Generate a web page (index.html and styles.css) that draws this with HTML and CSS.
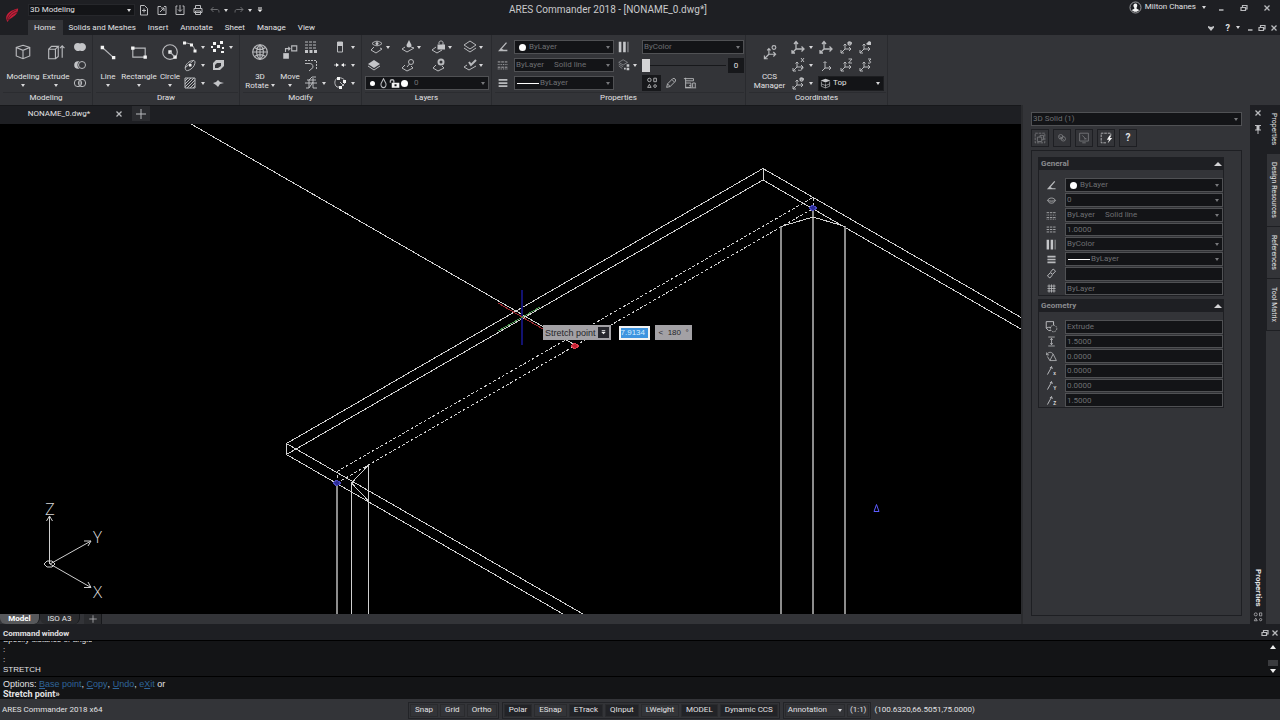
FILE: index.html
```html
<!DOCTYPE html>
<html lang="en">
<head>
    <meta charset="UTF-8">
    <meta name="viewport" content="width=device-width, initial-scale=1.0">
    <title>ARES Commander 2018 - [NONAME_0.dwg*]</title>
    <link rel="stylesheet" href="styles.css">
</head>
<body>
    <!-- Icon sprite -->
    <svg class="sprite" aria-hidden="true">
        <symbol id="i-new" viewBox="0 0 16 16"><path d="M4.5 3.500V13h7V6.5l-3-3h-4zM8 6.500v4M6 8.500h4"/></symbol>
        <symbol id="i-open" viewBox="0 0 16 16"><path d="M7 4.500H4V12.500h8V4.500h-2M6 10l4-4M7 6h3v3"/></symbol>
        <symbol id="i-save" viewBox="0 0 16 16"><path d="M5.500 4H4v8.500h8V4h-1.500M8 3v6M6 7.500L8 9.500l2-2"/></symbol>
        <symbol id="i-print" viewBox="0 0 16 16"><path d="M5.500 6.500v-3h5v3M4 6.500h8v4H4zM5.500 9h5v3.500h-5z"/></symbol>
        <symbol id="i-undo" viewBox="0 0 16 16"><path d="M6.500 5L4 7.500 6.500 10M4 7.500h6.500c1 0 1.500 1 1.500 3"/></symbol>
        <symbol id="i-redo" viewBox="0 0 16 16"><path d="M9.500 5L12 7.500 9.500 10M12 7.500H5.500c-1 0-1.500 1-1.500 3"/></symbol>
        <symbol id="i-box" viewBox="0 0 16 16"><path d="M8 2l6 2v7.500L8 14l-6-2.500V4zM2 4l6 2.500L14 4M8 6.500V14"/></symbol>
        <symbol id="i-extrude" viewBox="0 0 16 16"><path d="M1.500 5.500h6V14h-6zM1.500 5.500L4 3h6L7.500 5.500M10 3v9L7.500 14M13.500 13V2.500M11.500 4.500l2-2 2 2"/></symbol>
        <symbol id="i-union" viewBox="0 0 16 16"><path class="fill" d="M6 4a4 4 0 0 1 2 .6A4 4 0 0 1 14 8a4 4 0 0 1-6 3.400A4 4 0 0 1 2 8a4 4 0 0 1 4-4z"/></symbol>
        <symbol id="i-subtract" viewBox="0 0 16 16"><circle cx="10" cy="8" r="3.500"/><path class="fill" d="M6 4.200a3.800 3.800 0 0 0 0 7.600h1.500a4.500 4.500 0 0 1 0-7.600z"/></symbol>
        <symbol id="i-intersect" viewBox="0 0 16 16"><circle cx="6" cy="8" r="3.700"/><circle cx="10" cy="8" r="3.700"/><path d="M8 5.500v5"/></symbol>
        <symbol id="i-line" viewBox="0 0 16 16"><path d="M3 4l10 9"/><path class="fill w" d="M1.500 2.500h3v3h-3zM11.500 11.500h3v3h-3z"/></symbol>
        <symbol id="i-rect" viewBox="0 0 16 16"><path d="M2.500 4.500h11v8h-11z"/><path class="fill w" d="M1 3h3v3H1zM12 11h3v3h-3z"/></symbol>
        <symbol id="i-circle" viewBox="0 0 16 16"><circle cx="8" cy="8" r="6.500"/><path class="fill w" d="M6.500 6.500h3v3h-3zM11 11h3v3h-3z"/><path d="M8 8l4 4"/></symbol>
        <symbol id="i-arc" viewBox="0 0 16 16"><path d="M3 4c6 0 9 3 10 8"/><path class="fill w" d="M1 2.500h3v3H1zM8 4.500h3v3H8zM11.500 10.500h3v3h-3z"/></symbol>
        <symbol id="i-ellipse" viewBox="0 0 16 16"><path d="M4 13c-2-2 0-6 3-8s6-2 6 0-1 5-4 7-5 2-5 1zM3 11l9-8"/><path class="fill w" d="M7 7h2.500v2.500H7z"/></symbol>
        <symbol id="i-hatch" viewBox="0 0 16 16"><path d="M3 3h10v10H3zM3 6l3-3M3 9l6-6M3 12l9-9M5 13l8-8M8 13l5-5M11 13l2-2"/></symbol>
        <symbol id="i-points" viewBox="0 0 16 16"><path class="fill w" d="M3 3h3v3H3zM10 2h3v3h-3zM7 6h3v3H7zM3 10h3v3H3zM12 8h2v2h-2zM11 12h3v2h-3zM1 7h2v2H1z"/></symbol>
        <symbol id="i-region" viewBox="0 0 16 16"><path class="fill" fill-rule="evenodd" d="M6 3h8v6l-4 4H3V6zM7 6L5 8v3h3l3-2V6z"/></symbol>
        <symbol id="i-patch" viewBox="0 0 16 16"><path class="fill" d="M3 8l3-1 2-2 2 2 4 1-4 1-2 3-2-2z"/></symbol>
        <symbol id="i-globe" viewBox="0 0 16 16"><circle cx="8" cy="8" r="6.500"/><path d="M8 1.500v13M1.500 8h13M3 4c3 2 7 2 10 0M3 12c3-2 7-2 10 0M8 1.500c-4 3-4 10 0 13M8 1.500c4 3 4 10 0 13"/></symbol>
        <symbol id="i-move" viewBox="0 0 16 16"><path d="M9.500 2.500H14V7H9.500zM4 8V5h4M6.500 3.500L8 5 6.500 6.500"/><path class="fill" d="M2 9h5v5H2z"/></symbol>
        <symbol id="i-array" viewBox="0 0 16 16"><path d="M2 3h12M2 6h12M2 9h12" stroke-dasharray="3 1"/><path class="fill" d="M2 11h3v3H2zM6.500 11h3v3h-3zM11 11h3v3h-3z"/></symbol>
        <symbol id="i-fillet" viewBox="0 0 16 16"><path d="M2 3.500h11.500V12" stroke-dasharray="2 1"/><path d="M2 6.500h4c3 0 4 1 4 4l-4 3.500"/></symbol>
        <symbol id="i-trim" viewBox="0 0 16 16"><path d="M3 13h3V5l3-3h4M2 8h12M4 5h9M10 3v10h4M6 13l4-6"/></symbol>
        <symbol id="i-panel" viewBox="0 0 16 16"><path d="M5.500 3h5v10h-5z"/><path class="fill" d="M5 3h6v4H5z"/></symbol>
        <symbol id="i-break" viewBox="0 0 16 16"><path d="M2 8h4M10 8h4"/><path class="fill w" d="M4 6l3 2-3 2zM12 6L9 8l3 2z"/></symbol>
        <symbol id="i-polyedit" viewBox="0 0 16 16"><path d="M5 12C2 10 2 4 6 3s8 2 7 5l-4 4zM8 7l4 4"/><path class="fill w" d="M5 2h3v3H5zM11 5h3v3h-3zM7 11h3v3H7z"/></symbol>
        <!-- Layers -->
        <symbol id="i-lay-eye" viewBox="0 0 16 16"><path d="M5 8l-3 3 5 3 6-4-2-1M3 4.500c3-3 7-3 10 0-3 3-7 3-10 0z"/><circle class="fill" cx="8" cy="4.500" r="1.500"/></symbol>
        <symbol id="i-lay-freeze" viewBox="0 0 16 16"><path d="M5 8l-3 2 5 3 7-4-3-1"/><path class="fill" d="M9 1l2.500 5a2.500 2.500 0 1 1-5 0z"/></symbol>
        <symbol id="i-lay-lock" viewBox="0 0 16 16"><path d="M5 8l-4 3 5 3 5-3M8 5V3.500c0-2 4-2 4 0V6"/><path class="fill" d="M6.500 5.500h7.500v5H6.500z"/></symbol>
        <symbol id="i-lay" viewBox="0 0 16 16"><path d="M2 6l6-4 6 4-6 4zM2 9l6 4 6-4"/></symbol>
        <symbol id="i-lay-full" viewBox="0 0 16 16"><path class="fill" d="M2 7l6-4 6 4-6 4z"/><path d="M2 9l6 4 6-4"/></symbol>
        <symbol id="i-lay-find" viewBox="0 0 16 16"><path d="M5 8l-3 3 5 3 6-3-2-2M9.500 7L7 10"/><circle cx="11" cy="5" r="2.500"/></symbol>
        <symbol id="i-lay-gear" viewBox="0 0 16 16"><path d="M5 8l-3 3 5 3 6-3-2-2"/><circle cx="10" cy="5" r="2.500" stroke-width="2"/></symbol>
        <symbol id="i-lay-check" viewBox="0 0 16 16"><path d="M5 8l-3 2 5 3 7-4"/><path d="M7 5l2 3 5-5" stroke-width="2"/></symbol>
        <symbol id="i-drop" viewBox="0 0 16 16"><path d="M8 1L4.500 8c-1.500 8 8.500 8 7 0z" stroke-width="1.500"/></symbol>
        <symbol id="i-unlock" viewBox="0 0 16 16"><path d="M2 7V4c0-2 5-2 5 0v3" stroke-width="2"/><path class="fill w" fill-rule="evenodd" d="M4 7h11v7H4zM8 9v3h3V9z"/></symbol>
        <!-- Properties -->
        <symbol id="i-pencolor" viewBox="0 0 16 16"><path d="M12 3L4 12h9M5 10l4 2" stroke-width="1.500"/></symbol>
        <symbol id="i-linestyle" viewBox="0 0 16 16"><path d="M2 4.500h12M2 10.500h12" stroke-dasharray="3 1"/><path d="M2 7.500h12M2 12.500h12" stroke-dasharray="1 1"/></symbol>
        <symbol id="i-weight" viewBox="0 0 16 16"><path d="M3 4.500h10M3 8h10M3 11.500h10" stroke-width="2"/></symbol>
        <symbol id="i-bars" viewBox="0 0 16 16"><path class="fill" d="M2 2h3v12H2zM7 2h3v12H7z"/><path d="M12.500 2v12" stroke-opacity=".6" stroke-width="1.500"/></symbol>
        <symbol id="i-transp" viewBox="0 0 16 16"><path d="M2 5l5-3 5 3-5 3zM2 7l5 3M2 9l4 3" stroke-opacity=".6"/><path class="fill" d="M11 7h3v3h-3zM8 11h2v2H8zM11 11h3v3h-3z"/></symbol>
        <symbol id="i-shapes" viewBox="0 0 16 16"><circle cx="5" cy="4.500" r="2"/><path d="M10 2.500h3v4h-3zM3 13h4L5 9.500z"/><circle cx="11.500" cy="11.500" r="1.500"/></symbol>
        <symbol id="i-brush" viewBox="0 0 16 16"><path d="M3 13l1-4 6-6c2-1 4 1 3 3l-6 6zM4 9l3 3M9 4l3 3"/></symbol>
        <symbol id="i-list" viewBox="0 0 16 16"><path d="M3 2v12M1 3h11v2.500H3M3 8h6v5H3M11 13V8h3v5M7 11h2M3 13.500h12"/></symbol>
        <!-- Coordinates -->
        <symbol id="i-ccs-axes" viewBox="0 0 16 16"><path d="M7 5v5h6M7 10l-4 4M3 11v3h3M11 8l2 2-2 2M5.500 6.500L7 5l1.500 1.500"/></symbol>
        <symbol id="i-ccs" viewBox="0 0 16 16"><use href="#i-ccs-axes"/><circle cx="11.500" cy="4" r="1.700"/></symbol>
        <symbol id="i-ccs-prev" viewBox="0 0 16 16"><use href="#i-ccs-axes"/><path d="M10 4c1-2 4-1 3 1s-3 1-3-1h4" stroke-width="1.300"/></symbol>
        <symbol id="i-ccs-face" viewBox="0 0 16 16"><use href="#i-ccs-axes"/><path class="fill" d="M9 5l3-3 2 1v3h-3z"/></symbol>
        <symbol id="i-ccs-x" viewBox="0 0 16 16"><use href="#i-ccs-axes"/><path d="M11 1l3 4M14 1l-3 4M8 13c2 1 5 0 5-3"/></symbol>
        <symbol id="i-ccs-z" viewBox="0 0 16 16"><use href="#i-ccs-axes"/><path d="M10.500 2H14l-3.500 4H14"/></symbol>
        <symbol id="i-ccs-3" viewBox="0 0 16 16"><use href="#i-ccs-axes"/><path d="M11 2h3l-2 2c3 0 2 3-1 2"/></symbol>
        <symbol id="i-axes" viewBox="0 0 16 16"><path d="M6 3v7h8M6 10l-4 4M4 5l2-2.500L8 5M11.500 7.500L14 10l-2.500 2.500M2 11v3h3" stroke-width="1.300"/></symbol>
        <symbol id="i-axes-s" viewBox="0 0 16 16"><path d="M7 5v6h6M7 11l-3 3M5.500 6L7 4.500 8.500 6M11 9l2 2-2 2"/></symbol>
        <symbol id="i-view" viewBox="0 0 16 16"><path class="fill" d="M8 1l7 2.500L8 6.500 1 3.500z"/><path d="M2 5v7l6 2.500V8M14 5v7l-6 2.500M2 8.500L8 11l6-2.500"/></symbol>
        <!-- Window controls and palette -->
        <symbol id="i-min" viewBox="0 0 16 16"><path d="M6 10h4.500" stroke-width="1.500"/></symbol>
        <symbol id="i-restore" viewBox="0 0 16 16"><path d="M6.500 7V5.500H11V9H9.500M5 7.500h4.500v3H5z" stroke-width="1.200"/></symbol>
        <symbol id="i-close" viewBox="0 0 16 16"><path d="M5.500 5.500l5 5M10.500 5.500l-5 5" stroke-width="1.300"/></symbol>
        <symbol id="i-chev" viewBox="0 0 16 16"><path class="fill" d="M5 6l3 1 3-1v1.500L8 11 5 7.500z"/></symbol>
        <symbol id="i-menu" viewBox="0 0 16 16"><path class="fill w" d="M3 7h10l-5 5zM4 3h8v2H4z"/></symbol>
        <symbol id="i-plus" viewBox="0 0 16 16"><path d="M8 3v10M3 8h10"/></symbol>
        <symbol id="i-pin" viewBox="0 0 16 16"><path d="M5 4.500h6M5 9h6M8 9v4"/><path class="fill" d="M6.500 5h3v4h-3z"/></symbol>
        <symbol id="i-user" viewBox="0 0 16 16"><circle cx="8" cy="8" r="6.800"/><path class="fill w" d="M8 3c2 0 2.500 2 2 3.500S9 8.500 9.500 9.500l3 1.500c-2 3-7 3-9 0l3-1.500c.5-1-.5-1.500-1-3S6 3 8 3z"/></symbol>
        <symbol id="i-selset" viewBox="0 0 16 16"><path d="M2.500 2.500h11v11h-11z" stroke-dasharray="3 1"/><path d="M5 7h5v5H5zM8 7V5h4v5h-2"/></symbol>
        <symbol id="i-selmulti" viewBox="0 0 16 16"><circle cx="6.500" cy="6.500" r="2.500"/><circle cx="9.500" cy="9" r="2.500"/><path d="M5 9l5-3M5 6l5 4"/></symbol>
        <symbol id="i-selfilter" viewBox="0 0 16 16"><path d="M3 2.500h10v9H3zM6 5l4 4M8 9h3M6 13.500h4"/></symbol>
        <symbol id="i-selsmart" viewBox="0 0 16 16"><path d="M8 13.500H2.500v-11h11V5" stroke-dasharray="3 1"/><path class="fill w" d="M12 5h2l-1.500 3H15l-5 6 1.500-4H9z"/></symbol>
        <symbol id="i-layer-sm" viewBox="0 0 16 16"><path d="M3 8c2-4 8-4 10 0-2 1-8 1-10 0zM4 9c1 3 7 3 8 0"/></symbol>
        <symbol id="i-scale" viewBox="0 0 16 16"><path d="M2 5h12M2 8h12M2 11h12" stroke-dasharray="3 1"/></symbol>
        <symbol id="i-link" viewBox="0 0 16 16"><path d="M7 6l3-3.500 3 2.500-3.500 4L7 7M9 10l-3 3.500L3 11l3.500-4L9 9" stroke-width="1.200"/></symbol>
        <symbol id="i-grid" viewBox="0 0 16 16"><path d="M3 5h10M3 11h10M5 3v10M11 3v10M8 3v10M3 8h10"/></symbol>
        <symbol id="i-solid" viewBox="0 0 16 16"><path d="M1.500 2h9v4M1.500 2v8l3 3H7M1.500 10l3-1h3M10.500 2v4" stroke-width="1.200"/><circle cx="10.500" cy="10.500" r="4" stroke-dasharray="2 1"/></symbol>
        <symbol id="i-height" viewBox="0 0 16 16"><path d="M4 2.500h8M4 13.500h8M8 4v8M6.500 6L8 4l1.500 2M6.500 10L8 12l1.500-2"/></symbol>
        <symbol id="i-taper" viewBox="0 0 16 16"><path d="M2 6c2-4 6-4 8-1M6 13l4-8 4 8zM3 8l3 5M2 3v3h3"/></symbol>
        <symbol id="i-dir" viewBox="0 0 16 16"><path d="M3 13L8 4M6 5l2-2 1 3" stroke-width="1.200"/></symbol>
        <symbol id="i-logo" viewBox="0 0 16 16"><path d="M15 0C5 2-2 8 3 15.500c1-3 3-4 5-5C12 8 15 5 15 0z" fill="#c21f3a" stroke="none"/><path d="M13 1.500C7 4 3 8 2.500 13.500M14 4C9 6 5 9 4 13" stroke="#5c1420"/></symbol>
    </svg>

    <header class="header">
        <svg class="logo"><use href="#i-logo"/></svg>
        <div class="header-rows">
            <div class="titlebar">
                <div class="quick">
                    <div class="combo workspace"><select aria-label="Workspace"><option>3D Modeling</option></select></div>
                    <button class="icon" aria-label="New"><svg><use href="#i-new"/></svg></button>
                    <button class="icon" aria-label="Open"><svg><use href="#i-open"/></svg></button>
                    <button class="icon" aria-label="Save"><svg><use href="#i-save"/></svg></button>
                    <button class="icon" aria-label="Print"><svg><use href="#i-print"/></svg></button>
                    <button class="icon dim arrow" aria-label="Undo"><svg><use href="#i-undo"/></svg></button>
                    <button class="icon dim arrow" aria-label="Redo"><svg><use href="#i-redo"/></svg></button>
                    <button class="icon more" aria-label="Customize"><svg><use href="#i-menu"/></svg></button>
                </div>
                <h1>ARES Commander 2018 - [NONAME_0.dwg*]</h1>
                <div class="window-controls">
                    <button class="user arrow"><svg><use href="#i-user"/></svg>Milton Chanes</button>
                    <button class="icon" aria-label="Minimize"><svg><use href="#i-min"/></svg></button>
                    <button class="icon" aria-label="Restore"><svg><use href="#i-restore"/></svg></button>
                    <button class="icon" aria-label="Close"><svg><use href="#i-close"/></svg></button>
                </div>
            </div>
            <nav class="ribbon-tabs">
                <button class="active">Home</button>
                <button>Solids and Meshes</button>
                <button>Insert</button>
                <button>Annotate</button>
                <button>Sheet</button>
                <button>Manage</button>
                <button>View</button>
                <div class="doc-controls">
                    <button class="icon" aria-label="Collapse ribbon"><svg><use href="#i-chev"/></svg></button>
                    <button class="help arrow">?</button>
                    <button class="icon" aria-label="Minimize drawing"><svg><use href="#i-min"/></svg></button>
                    <button class="icon" aria-label="Restore drawing"><svg><use href="#i-restore"/></svg></button>
                    <button class="icon" aria-label="Close drawing"><svg><use href="#i-close"/></svg></button>
                </div>
            </nav>
        </div>
    </header>

    <!-- Ribbon -->
    <div class="ribbon">
        <section class="group modeling">
            <div class="tools">
                <button class="big"><svg><use href="#i-box"/></svg><span>Modeling</span><i></i></button>
                <button class="big"><svg><use href="#i-extrude"/></svg><span>Extrude</span><i></i></button>
                <button class="tool" aria-label="Union"><svg><use href="#i-union"/></svg></button>
                <button class="tool" aria-label="Subtract"><svg><use href="#i-subtract"/></svg></button>
                <button class="tool" aria-label="Intersect"><svg><use href="#i-intersect"/></svg></button>
            </div>
            <h2>Modeling</h2>
        </section>
        <section class="group draw">
            <div class="tools">
                <button class="big"><svg><use href="#i-line"/></svg><span>Line</span><i></i></button>
                <button class="big"><svg><use href="#i-rect"/></svg><span>Rectangle</span><i></i></button>
                <button class="big"><svg><use href="#i-circle"/></svg><span>Circle</span><i></i></button>
                <button class="tool arrow" aria-label="Arc"><svg><use href="#i-arc"/></svg></button>
                <button class="tool arrow" aria-label="Ellipse"><svg><use href="#i-ellipse"/></svg></button>
                <button class="tool arrow" aria-label="Hatch"><svg><use href="#i-hatch"/></svg></button>
                <button class="tool arrow" aria-label="Points"><svg><use href="#i-points"/></svg></button>
                <button class="tool" aria-label="Region"><svg><use href="#i-region"/></svg></button>
                <button class="tool" aria-label="Patch"><svg><use href="#i-patch"/></svg></button>
            </div>
            <h2>Draw</h2>
        </section>
        <section class="group modify">
            <div class="tools">
                <button class="big"><svg><use href="#i-globe"/></svg><span>3D</span><span class="arrow">Rotate</span></button>
                <button class="big"><svg><use href="#i-move"/></svg><span>Move</span><i></i></button>
                <button class="tool" aria-label="Pattern"><svg><use href="#i-array"/></svg></button>
                <button class="tool" aria-label="Fillet"><svg><use href="#i-fillet"/></svg></button>
                <button class="tool arrow" aria-label="Trim"><svg><use href="#i-trim"/></svg></button>
                <button class="tool arrow" aria-label="Align"><svg><use href="#i-panel"/></svg></button>
                <button class="tool arrow" aria-label="Break"><svg><use href="#i-break"/></svg></button>
                <button class="tool arrow" aria-label="Edit polyline"><svg><use href="#i-polyedit"/></svg></button>
            </div>
            <h2>Modify</h2>
        </section>
        <section class="group layers">
            <div class="tools">
                <button class="tool arrow" aria-label="Show layers"><svg><use href="#i-lay-eye"/></svg></button>
                <button class="tool arrow" aria-label="Freeze layer"><svg><use href="#i-lay-freeze"/></svg></button>
                <button class="tool arrow" aria-label="Lock layer"><svg><use href="#i-lay-lock"/></svg></button>
                <button class="tool arrow" aria-label="Isolate layer"><svg><use href="#i-lay"/></svg></button>
                <button class="tool first" aria-label="Layers manager"><svg><use href="#i-lay-full"/></svg></button>
                <button class="tool" aria-label="Layer preview"><svg><use href="#i-lay-find"/></svg></button>
                <button class="tool" aria-label="Layer states"><svg><use href="#i-lay-gear"/></svg></button>
                <button class="tool arrow" aria-label="Activate layer"><svg><use href="#i-lay-check"/></svg></button>
                <div class="combo dim">
                    <b class="dot small"></b>
                    <svg><use href="#i-drop"/></svg>
                    <svg><use href="#i-unlock"/></svg>
                    <b class="dot"></b>
                    <select aria-label="Layer"><option>0</option></select>
                </div>
            </div>
            <h2>Layers</h2>
        </section>
        <section class="group properties">
            <div class="tools">
                <svg><use href="#i-pencolor"/></svg>
                <div class="combo dim"><b class="dot"></b><select aria-label="Line color"><option>ByLayer</option></select></div>
                <svg><use href="#i-bars"/></svg>
                <div class="combo dim"><select aria-label="Print style"><option>ByColor</option></select></div>
                <svg><use href="#i-linestyle"/></svg>
                <div class="combo dim"><select aria-label="Line style"><option>ByLayer &nbsp; &nbsp; Solid line</option></select></div>
                <button class="tool arrow" aria-label="Transparency"><svg><use href="#i-transp"/></svg></button>
                <div class="slider"><input type="range" min="0" max="90" value="0" aria-label="Transparency value"><output>0</output></div>
                <svg><use href="#i-weight"/></svg>
                <div class="combo dim"><b class="rule"></b><select aria-label="Line weight"><option>ByLayer</option></select></div>
                <span></span>
                <div class="row">
                    <button class="icon pressed" aria-label="Properties palette"><svg><use href="#i-shapes"/></svg></button>
                    <button class="icon" aria-label="Property painter"><svg><use href="#i-brush"/></svg></button>
                    <button class="icon" aria-label="List properties"><svg><use href="#i-list"/></svg></button>
                </div>
            </div>
            <h2>Properties</h2>
        </section>
        <section class="group coords">
            <div class="tools">
                <button class="big"><svg><use href="#i-ccs"/></svg><span>CCS</span><span>Manager</span></button>
                <button class="tool arrow" aria-label="World"><svg><use href="#i-axes"/></svg></button>
                <button class="tool" aria-label="Origin"><svg><use href="#i-axes"/></svg></button>
                <button class="tool" aria-label="Previous"><svg><use href="#i-ccs-prev"/></svg></button>
                <button class="tool" aria-label="Face"><svg><use href="#i-ccs-face"/></svg></button>
                <button class="tool arrow" aria-label="Rotate X"><svg><use href="#i-ccs-x"/></svg></button>
                <button class="tool" aria-label="View"><svg><use href="#i-axes-s"/></svg></button>
                <button class="tool" aria-label="Z axis"><svg><use href="#i-ccs-z"/></svg></button>
                <button class="tool" aria-label="3 points"><svg><use href="#i-ccs-3"/></svg></button>
                <button class="tool arrow" aria-label="Named"><svg><use href="#i-ccs-prev"/></svg></button>
                <div class="combo"><svg><use href="#i-view"/></svg><select aria-label="View orientation"><option>Top</option></select></div>
            </div>
            <h2>Coordinates</h2>
        </section>
    </div>

    <main class="main">
        <div class="workspace-area">
            <div class="doc-tabs">
                <button class="doc-tab">NONAME_0.dwg*</button>
                <button class="icon" aria-label="Close tab"><svg><use href="#i-close"/></svg></button>
                <button class="icon add" aria-label="New tab"><svg><use href="#i-plus"/></svg></button>
            </div>

            <div class="canvas">
                <svg class="drawing" viewBox="0 124 1021 490" preserveAspectRatio="xMinYMin slice" shape-rendering="crispEdges">
                    <path d="M191 124L575 345"/>
                    <path d="M286.500 443.500L763 168.500L1021 317.500M286.500 454.500L763 180L1021 329M286.500 443.500V454.500M763 168V180"/>
                    <path d="M286.500 443.500L583 614M286.500 454.500L563 614"/>
                    <path class="hidden-line" d="M337 471.500L813 197.500V208M337 483V471.500M337 483L813 208.500"/>
                    <path d="M351.500 483V614M368.500 465V614M351.500 483L368.500 465M351.500 483L368.500 501"/>
                    <path class="thick" d="M337 483V614M781 226V614M813 208V614M845 226V614"/>
                    <path d="M781 226.500L813 217L845 226.500"/>
                    <!-- cursor -->
                    <path class="blue" d="M522 290V345"/>
                    <path class="red" d="M498 303L548 332"/>
                    <path class="green" d="M498 331L540 307"/>
                    <!-- grips -->
                    <path class="grip-blue" d="M333 483l4-3 4 3-4 3zM809 208l4-3 4 3-4 3z"/>
                    <path class="grip-red" d="M571 346l4-3 4 3-4 3z"/>
                    <path class="marker" shape-rendering="auto" d="M874 511.500L876.500 504.500L879 511.500z"/>
                    <!-- coordinate system symbol -->
                    <g shape-rendering="auto">
                        <path d="M49.500 564V516M46.500 521L49.500 516L52.500 521M50 564L91 541M84 541H91L88 546M50 564L91 587.500M88 582L91 587.500H84M44 564l3-3h5l3 3-3 3h-5z"/>
                        <text x="45" y="515">Z</text>
                        <text x="93" y="543">Y</text>
                        <text x="93" y="598">X</text>
                    </g>
                </svg>
                <div class="prompt">
                    <label for="stretch">Stretch point</label>
                    <button aria-label="Options"><svg><use href="#i-menu"/></svg></button>
                    <input id="stretch" class="distance" value="7.9134">
                    <output>&lt; &nbsp;180 &nbsp;°</output>
                </div>
            </div>

            <div class="sheet-tabs">
                <button class="active">Model</button>
                <button>ISO A3</button>
                <button class="icon" aria-label="New sheet"><svg><use href="#i-plus"/></svg></button>
            </div>
        </div>

        <!-- Properties palette -->
        <aside class="palette">
            <div class="combo dim"><select aria-label="Selection"><option>3D Solid (1)</option></select></div>
            <div class="palette-tools">
                <button class="dim" aria-label="Select entities"><svg><use href="#i-selset"/></svg></button>
                <button class="dim" aria-label="Select matching"><svg><use href="#i-selmulti"/></svg></button>
                <button class="dim" aria-label="Filter"><svg><use href="#i-selfilter"/></svg></button>
                <button aria-label="Smart select"><svg><use href="#i-selsmart"/></svg></button>
                <button>?</button>
            </div>
            <div class="palette-body">
                <section>
                    <h3>General</h3>
                    <div class="fields general">
                        <svg><use href="#i-pencolor"/></svg><div class="combo dim"><b class="dot"></b><select aria-label="Color"><option>ByLayer</option></select></div>
                        <svg><use href="#i-layer-sm"/></svg><div class="combo dim"><select aria-label="Entity layer"><option>0</option></select></div>
                        <svg><use href="#i-linestyle"/></svg><div class="combo dim"><select aria-label="Entity line style"><option>ByLayer &nbsp; &nbsp; Solid line</option></select></div>
                        <svg><use href="#i-scale"/></svg><input aria-label="Line scale" value="1.0000">
                        <svg><use href="#i-bars"/></svg><div class="combo dim"><select aria-label="Entity print style"><option>ByColor</option></select></div>
                        <svg><use href="#i-weight"/></svg><div class="combo dim"><b class="rule"></b><select aria-label="Entity line weight"><option>ByLayer</option></select></div>
                        <svg><use href="#i-link"/></svg><input aria-label="Hyperlink" value="">
                        <svg><use href="#i-grid"/></svg><input aria-label="Entity transparency" value="ByLayer">
                    </div>
                </section>
                <section>
                    <h3>Geometry</h3>
                    <div class="fields geometry">
                        <svg><use href="#i-solid"/></svg><input aria-label="Solid type" value="Extrude">
                        <svg><use href="#i-height"/></svg><input aria-label="Height" value="1.5000">
                        <svg><use href="#i-taper"/></svg><input aria-label="Taper angle" value="0.0000">
                        <svg viewBox="0 0 16 16"><use href="#i-dir"/><text x="10" y="14">x</text></svg><input aria-label="Direction X" value="0.0000">
                        <svg viewBox="0 0 16 16"><use href="#i-dir"/><text x="10" y="14">Y</text></svg><input aria-label="Direction Y" value="0.0000">
                        <svg viewBox="0 0 16 16"><use href="#i-dir"/><text x="10" y="14">Z</text></svg><input aria-label="Direction Z" value="1.5000">
                    </div>
                </section>
            </div>
        </aside>
        <div class="palette-bar">
            <button class="icon" aria-label="Close palette"><svg><use href="#i-close"/></svg></button>
            <button class="icon" aria-label="Pin palette"><svg><use href="#i-pin"/></svg></button>
            <strong>Properties</strong>
            <svg><use href="#i-shapes"/></svg>
        </div>
        <nav class="side-tabs">
            <button class="active">Properties</button>
            <button>Design Resources</button>
            <button>References</button>
            <button>Tool Matrix</button>
        </nav>
    </main>

    <!-- Command window -->
    <section class="command">
        <div class="command-title">
            <h2>Command window</h2>
            <button class="icon" aria-label="Float"><svg><use href="#i-restore"/></svg></button>
            <button class="icon" aria-label="Close command window"><svg><use href="#i-close"/></svg></button>
        </div>
        <div class="history">
            <div class="lines">
                <p>Specify distance or angle</p>
                <p>:</p>
                <p>:</p>
                <p>STRETCH</p>
            </div>
            <div class="scroll"><i class="up"></i><i class="thumb"></i><i class="down"></i></div>
        </div>
        <div class="entry">
            <p>Options: <a href="#"><u>B</u>ase point</a>, <a href="#"><u>C</u>opy</a>, <a href="#"><u>U</u>ndo</a>, <a href="#">e<u>X</u>it</a> or</p>
            <p><label for="cmd">Stretch point»</label><input id="cmd"></p>
        </div>
    </section>

    <footer class="status">
        <span class="version">ARES Commander 2018 x64</span>
        <div class="toggles">
            <button>Snap</button>
            <button>Grid</button>
            <button>Ortho</button>
        </div>
        <div class="toggles">
            <button class="on">Polar</button>
            <button>ESnap</button>
            <button class="on">ETrack</button>
            <button class="on">QInput</button>
            <button>LWeight</button>
            <button class="on">MODEL</button>
            <button class="on">Dynamic CCS</button>
        </div>
        <div class="toggles scale">
            <button class="arrow">Annotation</button>
            <button>(1:1)</button>
        </div>
        <span>(100.6320,66.5051,75.0000)</span>
    </footer>
</body>
</html>
```

FILE: styles.css
```css
* {
    box-sizing: border-box;
}

body {
    font-family: 'Roboto', sans-serif;
    font-size: 8px;
    line-height: 10px;
    margin: 0;
    height: 100vh;
    display: flex;
    flex-direction: column;
    overflow: hidden;
    background: #1e1f23;
    color: #e2e2e4;
}

h1, h2, h3, p {
    margin: 0;
    font-size: 8px;
    font-weight: normal;
}

button, input, select, output {
    font: inherit;
    color: inherit;
}

button {
    display: flex;
    align-items: center;
    justify-content: center;
    padding: 0;
    border: none;
    background: none;
    white-space: nowrap;
}

svg {
    width: 16px;
    height: 16px;
    flex: none;
    fill: none;
    stroke: #b9babd;
}

.sprite {
    display: none;
}

.fill {
    fill: #c4c5c8;
    stroke: none;
}

.w {
    fill: #f4f4f4;
}

.icon {
    width: 18px;
    height: 16px;
}

.dim svg {
    opacity: 0.5;
}

/* Small drop-down arrows */
.arrow::after, .combo::after, .big i {
    content: '';
    flex: none;
    border: 2px solid transparent;
    border-top: 3px solid #d8d8da;
    border-bottom: none;
}

/* Combo boxes */
.combo {
    display: flex;
    align-items: center;
    height: 14px;
    min-width: 0;
    padding: 0 3px 0 1px;
    background: #131417;
    border: 1px solid #505154;
}

.combo select {
    flex: 1;
    min-width: 0;
    appearance: none;
    background: none;
    border: none;
    padding: 0;
    height: 12px;
}

.combo.dim {
    color: #6e6f72;
}

.combo.dim svg {
    opacity: 1;
}

.combo.dim::after {
    border-top-color: #77787b;
}

.dot {
    width: 7px;
    height: 7px;
    margin: 0 3px;
    border-radius: 50%;
    background: #fff;
}

.dot.small {
    width: 5px;
    height: 5px;
}

.rule {
    width: 22px;
    margin: 0 1px;
    border-top: 1px solid #fff;
}

/* Header */
.header {
    display: flex;
}

.logo {
    width: 14px;
    height: 15px;
    margin: 8px 9px 0 5px;
}

.header-rows {
    flex: 1;
}

.titlebar {
    display: grid;
    grid-template-columns: 481px 1fr auto;
    height: 20px;
}

.quick {
    display: flex;
    align-items: center;
}

.quick .workspace {
    width: 107px;
    height: 12px;
    border-color: #26272b;
}

.quick .icon.arrow {
    width: 24px;
    justify-content: flex-start;
    gap: 1px;
}

.quick .more {
    width: 9px;
}

.quick .more svg {
    width: 8px;
    height: 8px;
}

h1 {
    font-size: 10px;
    line-height: 20px;
    color: #c9c9cb;
}

.window-controls {
    display: flex;
    height: 14px;
    padding-right: 2px;
}

.window-controls .icon {
    width: 23px;
}

.user {
    gap: 3px;
    margin-right: 3px;
}

.user svg {
    width: 13px;
    height: 13px;
}

.user::after {
    margin-left: 3px;
}

.ribbon-tabs {
    display: flex;
    height: 15px;
}

.ribbon-tabs > button {
    padding: 1px 6px 0;
}

.ribbon-tabs .active {
    padding: 1px 7px 0 6px;
    background: #333438;
}

.doc-controls {
    display: flex;
    align-items: center;
    margin-left: auto;
}

.doc-controls .icon {
    width: 12px;
}

.help {
    font-weight: bold;
    font-size: 9px;
    gap: 6px;
    padding: 0 4px 0 9px;
}

/* Ribbon */
.ribbon {
    display: flex;
    height: 70px;
    background: #333438;
}

.group {
    border-right: 1px solid #292a2e;
    padding: 3px 1px 0 3px;
}

.group h2 {
    padding-right: 2px;
    border-top: 1px solid #2b2c30;
    line-height: 10px;
    text-align: center;
}

.tools {
    display: grid;
    grid-template-rows: repeat(3, 18px);
    grid-auto-flow: column;
    align-items: center;
}

.big {
    grid-row: span 3;
    flex-direction: column;
    justify-content: flex-start;
    height: 54px;
    padding-top: 5px;
    line-height: 9px;
}

.big svg {
    width: 18px;
    height: 18px;
    margin-bottom: 11px;
}

.big i {
    margin-top: 3px;
}

.big .arrow {
    display: flex;
    align-items: center;
    gap: 2px;
}

.tool {
    justify-content: flex-start;
    gap: 3px;
}

.modeling .tools {
    grid-template-columns: 40px 26px 22px;
}

.modeling .tool {
    justify-content: center;
}

.draw .tools {
    grid-template-columns: 24px 38px 24px 28px 28px;
}

.modify .tools {
    grid-template-columns: 34px 26px 29px 28px;
}

.layers .tools {
    grid-template-columns: repeat(4, 31px);
    grid-auto-flow: row;
    padding-right: 1px;
}

.layers .tool {
    gap: 1px;
    padding-left: 4px;
}

.layers .tool.first {
    padding-left: 1px;
}

.layers .combo {
    grid-column: span 4;
}

.layers .combo svg {
    width: 11px;
    height: 11px;
}

.layers .combo .dot:not(.small) {
    margin: 0 6px 0 1px;
}

.properties .tools {
    grid-template-columns: 16px 100px 22px 102px;
    grid-auto-flow: row;
    column-gap: 3px;
}

.properties .tool {
    gap: 2px;
}

.properties svg {
    width: 14px;
    height: 14px;
    justify-self: center;
}

.properties .tools > svg:nth-child(4n + 3) {
    justify-self: start;
}

.row {
    display: flex;
    align-items: center;
}

.row .icon {
    width: 19px;
}

.pressed {
    background: #17181b;
}

.slider {
    display: flex;
    align-items: center;
    gap: 2px;
}

.slider input {
    appearance: none;
    flex: 1;
    min-width: 0;
    height: 14px;
    margin: 0;
    background: linear-gradient(#17181b, #17181b) center / 100% 1px no-repeat;
}

.slider input::-webkit-slider-thumb {
    appearance: none;
    width: 8px;
    height: 13px;
    background: #d3d3d5;
}

.slider output {
    width: 16px;
    background: #17181b;
    line-height: 15px;
    text-align: center;
}

.coords .tools {
    grid-template-columns: 41px 28px 20px 19px 27px;
    grid-auto-flow: row;
    padding-right: 2px;
}

.coords .combo {
    grid-column: span 3;
    height: 15px;
    border-color: #1d1e21;
}

.coords .combo svg {
    width: 11px;
    height: 11px;
    margin-right: 2px;
}

/* Drawing area */
.main {
    display: flex;
    flex: 1;
    min-height: 0;
    margin-bottom: 2px;
    background: #333438;
}

.workspace-area {
    display: flex;
    flex-direction: column;
    flex: 1;
    min-width: 0;
    border-right: 2px solid #2a2b2e;
}

.doc-tabs {
    display: flex;
    align-items: center;
    height: 19px;
    padding-bottom: 3px;
    background: #1e1f23;
    border-top: 1px solid #17181b;
}

.doc-tab {
    width: 110px;
    padding-left: 8px;
}

.doc-tabs .add {
    height: 15px;
    margin-left: 4px;
    background: #2b2c30;
}

.canvas {
    position: relative;
    flex: 1;
    min-height: 0;
    background: #000;
}

.drawing {
    display: block;
    width: 100%;
    height: 100%;
    stroke: #d0d0d0;
}

.drawing text {
    font: 17px 'Open Sans', sans-serif;
    font-weight: 300;
    fill: #d8d8d8;
    stroke: none;
}

.hidden-line {
    stroke-dasharray: 3 2;
}

.thick {
    stroke: #8c8c8c;
    stroke-width: 2;
}

.blue {
    stroke: #121270;
    stroke-width: 2;
}

.red {
    stroke: #a02a30;
}

.green {
    stroke: #4b9450;
}

.grip-blue {
    fill: #2a2a96;
    stroke: #4a4ac0;
}

.grip-red {
    fill: #c02030;
    stroke: #e04050;
}

.marker {
    stroke: #5c5cff;
}

/* Input beside the cursor */
.prompt {
    position: absolute;
    left: 543px;
    top: 201px;
    display: flex;
    align-items: center;
    height: 15px;
    font: 9px 'Liberation Sans', sans-serif;
    color: #26262a;
}

.prompt label, .prompt button, .prompt output {
    background: #a3a1a5;
    height: 15px;
    line-height: 16px;
}

.prompt label {
    padding: 0 2px;
}

.prompt button {
    padding-right: 2px;
}

.prompt button svg {
    width: 11px;
    height: 11px;
    padding: 2px;
    background: #26262c;
}

.prompt .distance {
    width: 31px;
    height: 14px;
    margin: 0 5px 0 8px;
    padding: 0;
    border: 2px solid #f2f2f2;
    background: #3d94e0;
    color: #d9efff;
    font-size: 8px;
}

.prompt output {
    padding: 0 0 0 4px;
    width: 37px;
    font-size: 8px;
    white-space: nowrap;
}

.sheet-tabs {
    display: flex;
    height: 10px;
}

.sheet-tabs button {
    width: 40px;
    height: 10px;
    border-radius: 0 0 6px 6px;
    background: #2a2b2e;
    border-right: 1px solid #17181b;
}

.sheet-tabs .active {
    background: #57585b;
    color: #fff;
    font-weight: bold;
}

.sheet-tabs .icon {
    width: 18px;
    margin-left: 4px;
    border-radius: 0;
}

.sheet-tabs .icon svg {
    width: 12px;
    height: 12px;
}

/* Palette */
.palette {
    display: flex;
    flex-direction: column;
    width: 227px;
    padding: 7px 8px 8px;
}

.palette-tools {
    display: flex;
    gap: 4px;
    margin: 3px 0;
}

.palette-tools button {
    width: 18px;
    height: 18px;
    border: 1px solid #1e1f23;
    font-weight: bold;
    font-size: 10px;
}

.palette-tools svg {
    width: 14px;
    height: 14px;
}

.palette-body {
    flex: 1;
    padding: 6px 17px 0 6px;
    border: 1px solid #1e1f23;
}

.palette section {
    border: 1px solid #1e1f23;
    border-top: none;
    margin-bottom: 3px;
}

h3 {
    display: flex;
    align-items: center;
    justify-content: space-between;
    height: 13px;
    padding: 0 1px 0 2px;
    background: #1e1f23;
    color: #8a8b8e;
    font-weight: bold;
}

h3::after {
    content: '';
    border: 4px solid transparent;
    border-bottom: 4px solid #d3d3d5;
    border-top: none;
}

.fields {
    display: grid;
    grid-template-columns: 26px 1fr;
    grid-auto-rows: 1fr;
    row-gap: 1px;
    margin-top: 8px;
    align-items: center;
}

.general {
    height: 117px;
}

.geometry {
    height: 87px;
}

.fields svg {
    width: 13px;
    height: 13px;
}

.fields > svg {
    margin-left: 6px;
}

.fields svg text {
    font: bold 6px 'Liberation Sans', sans-serif;
    fill: #dcdcde;
    stroke: none;
}

.fields .combo, .fields input {
    width: 100%;
    min-width: 0;
    height: 100%;
}

.fields input {
    padding: 0 1px;
    background: #131417;
    border: 1px solid #505154;
    color: #6e6f72;
}

.palette-bar {
    display: flex;
    flex-direction: column;
    align-items: center;
    width: 16px;
    padding-bottom: 1px;
    background: #1e1f23;
}

.palette-bar .icon {
    width: 16px;
}

.palette-bar strong, .side-tabs button {
    writing-mode: vertical-rl;
}

.palette-bar strong {
    margin-top: auto;
    margin-bottom: 4px;
}

.palette-bar > svg {
    width: 12px;
    height: 12px;
}

.side-tabs {
    display: flex;
    flex-direction: column;
    width: 14px;
}

.side-tabs button {
    padding: 8px 0;
    border: 1px solid #1e1f23;
    border-top: none;
    border-right: none;
    font-size: 7px;
}

.side-tabs .active {
    background: #1e1f23;
}

/* Command window */
.command {
    font-family: 'Liberation Sans', sans-serif;
    background: #131416;
}

.command-title {
    display: flex;
    align-items: center;
    height: 15px;
    padding-left: 3px;
    background: #1e1f23;
    border-bottom: 1px solid #000;
}

.command-title h2 {
    flex: 1;
    padding-top: 1px;
    font-family: 'Roboto', sans-serif;
    font-weight: bold;
}

.command-title .icon {
    width: 10px;
}

.history {
    display: flex;
    justify-content: space-between;
    height: 36px;
    border-bottom: 1px solid #000;
}

.lines {
    display: flex;
    flex-direction: column;
    justify-content: flex-end;
    height: 34px;
    padding-left: 3px;
    overflow: hidden;
}

.scroll {
    display: flex;
    flex-direction: column;
    align-items: center;
    width: 14px;
    padding: 4px 0 3px;
}

.scroll .up {
    border: 3px solid transparent;
    border-bottom: 4px solid #eee;
    border-top: none;
}

.scroll .thumb {
    width: 10px;
    height: 6px;
    margin: auto 0 3px;
    background: #3a3b3e;
}

.scroll .down {
    border: 3px solid transparent;
    border-top: 4px solid #eee;
    border-bottom: none;
}

.entry {
    padding: 2px 3px 0;
    height: 22px;
}

.entry p {
    display: flex;
    font-size: 9px;
    white-space: pre;
}

.entry a {
    color: #2f6499;
    text-decoration: none;
}

.entry label {
    font-family: 'Roboto', sans-serif;
    font-weight: bold;
}

.entry input {
    flex: 1;
    height: 10px;
    padding: 0;
    background: none;
    border: none;
}

/* Status bar */
.status {
    display: flex;
    align-items: center;
    gap: 3px;
    height: 21px;
    padding-top: 1px;
    background: #333438;
}

.version {
    width: 405px;
    padding-left: 2px;
}

.toggles {
    display: flex;
    gap: 2px;
    padding: 1px;
    height: 17px;
    border: 1px solid #222327;
}

.toggles button {
    padding: 0 4px;
    border: 1px solid #2a2b2e;
}

.toggles .on {
    background: #222327;
}

.toggles.scale button {
    padding: 0 2px;
}

.toggles .arrow {
    gap: 11px;
}
```
